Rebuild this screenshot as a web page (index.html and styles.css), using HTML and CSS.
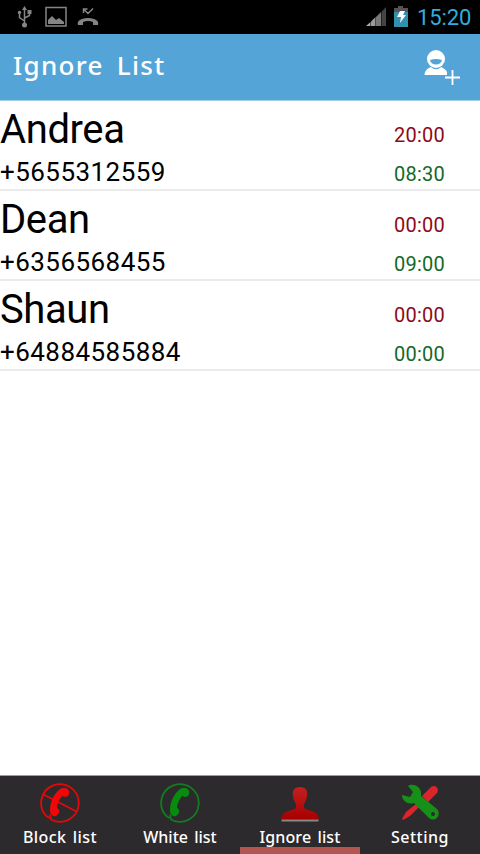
FILE: index.html
```
<!DOCTYPE html>
<html lang="en">
<head>
<meta charset="utf-8">
<title>Ignore List</title>
<link rel="stylesheet" href="styles.css">
</head>
<body>
<div class="status">
  <svg class="notices" width="110" height="34" viewBox="0 0 110 34" fill="none" stroke="#858585" stroke-width="1.5">
    <path d="M24.500 9v16M24.500 21l-5-3.500V13M24.500 18l5-2.500V12"/>
    <path d="M22 10l2.500-4 2.500 4z" fill="#858585" stroke="none"/>
    <circle cx="24.500" cy="25" r="2.500" fill="#858585" stroke="none"/>
    <circle cx="19.500" cy="12.500" r="1.700" fill="#858585" stroke="none"/>
    <path d="M27.500 10h4v4h-4z" fill="#858585" stroke="none"/>
    <path d="M46 7.500h20v18.500H46z"/>
    <path d="M48 24v-4l4-4 4 4 3-2 5 4v2z" fill="#858585" stroke="none"/>
    <path d="M78 25c-1-3 1-5 4-6 4-1.300 8-1.300 12 0 3 1 5 3 4 6h-5V22c-3-1.200-7-1.200-10 0v3z" fill="#858585" stroke="none"/>
    <path d="M83.500 13V9H87.500M84 9.500l4 4 5-5"/>
  </svg>
  <svg class="signals" width="50" height="34" viewBox="0 0 50 34">
    <path d="M1 26L5.500 22v4z" fill="#aaa"/><path d="M6 26v-4.500L10.500 17v9z" fill="#999"/><path d="M11 26v-9l5-5v14z" fill="#777"/><path d="M16.500 26V12L21 7v19z" fill="#444"/>
    <path d="M33 6h5v2h5v5H29V8h4z" fill="#5a5353"/>
    <path d="M29 12h14v15H29z" fill="#328fae"/>
    <path d="M35 11h5l-2 4h3l-6 8 1-6h-4z" fill="#fff"/>
  </svg>
  <span class="clock">15:20</span>
</div>
<header class="bar">
  <h1 class="title">Ignore List</h1>
  <svg class="add" width="38" height="38" viewBox="0 0 38 38">
    <circle cx="14" cy="11" r="9" fill="#fff"/>
    <path d="M8 12c4-1.500 8-1.500 12 0-1 6-11 6-12 0z" fill="#55a4d7"/>
    <path d="M2.500 27c.5-5 3-6.500 6.500-8 3 3 7 3 10 0 3 1.300 5 3 6 5v3z" fill="#fff"/>
    <path d="M30.500 22v15M23 29.500h15" stroke="#55a4d7" stroke-width="4"/>
    <path d="M30.500 22v15M23 29.500h15" stroke="#fff" stroke-width="1.800"/>
  </svg>
</header>
<main class="list">
  <section class="row"><div class="person"><div class="name">Andrea</div><div class="phone">+5655312559</div></div><div class="times"><div class="from">20:00</div><div class="to">08:30</div></div></section>
  <section class="row"><div class="person"><div class="name">Dean</div><div class="phone">+6356568455</div></div><div class="times"><div class="from">00:00</div><div class="to">09:00</div></div></section>
  <section class="row"><div class="person"><div class="name">Shaun</div><div class="phone">+64884585884</div></div><div class="times"><div class="from">00:00</div><div class="to">00:00</div></div></section>
</main>
<nav class="tabs">
  <div class="tab">
    <svg class="icon" viewBox="0 0 40 40" fill="none" stroke="#e60808" stroke-width="1.800">
      <path d="M9.500 35L6.700 33.300A18.800 18.800 0 1 1 11 36.500L10 31.500M3.500 11.500l33 17"/>
      <path d="M19 7c3-3 8-3 10 1 1 3-1 6-4 6l-3-1c-3 4-5 8-5 12 3 1 3 6-1 8-3 1-6-1-6-6 0-7 3-15 9-20z" fill="#f00808" stroke="none"/>
    </svg>
    <span class="label block">Block list</span>
  </div>
  <div class="tab">
    <svg class="icon" viewBox="0 0 40 40" fill="none" stroke="#137c20" stroke-width="1.800">
      <path d="M9.500 35L6.700 33.300A18.800 18.800 0 1 1 11 36.500L10 31.500"/>
      <path d="M19 7c3-3 8-3 10 1 1 3-1 6-4 6l-3-1c-3 4-5 8-5 12 3 1 3 6-1 8-3 1-6-1-6-6 0-7 3-15 9-20z" fill="#088c0d" stroke="none"/>
    </svg>
    <span class="label white">White list</span>
  </div>
  <div class="tab active">
    <svg class="icon" viewBox="0 0 40 40">
      <defs><linearGradient id="person" x2="0" y2="1"><stop stop-color="#c42020"/><stop offset="1" stop-color="#a80000"/></linearGradient></defs>
      <path d="M1.500 37.500h37" stroke="#888" stroke-width="2"/>
      <path d="M20 4c6 0 8 4 7 9-.4 4-2 6-3 8v4c3 3 14 2 15 11H1c1-9 12-8 15-11v-4c-1-2-2.600-4-3-8-1-5 1-9 7-9z" fill="url(#person)"/>
    </svg>
    <span class="label ignore">Ignore list</span>
  </div>
  <div class="tab">
    <svg class="icon" viewBox="0 0 40 40">
      <path d="M22 13l9-9c4-3 9 1 6 6l-9 9zM16 21l3 3-9 9-7 4-1-1 4-7z" fill="#d9252b"/>
      <path d="M10 2l-2 1 5 6-3 5-8-2C2 18 8 22 14 20l15 15c6 5 13-3 8-9L21 13C22 6 17 1 10 2z" fill="#169018"/>
      <circle cx="33" cy="31" r="2" fill="#2d2a2d"/>
    </svg>
    <span class="label setting">Setting</span>
  </div>
</nav>
</body>
</html>
```
FILE: styles.css
```
* { box-sizing: border-box; }
body { margin: 0; width: 480px; height: 854px; display: flex; flex-direction: column; background: #fff; font-family: Roboto, sans-serif; overflow: hidden; }
.status { height: 34px; flex: none; background: #000; display: flex; }
.signals { margin-left: 255px; }
.clock { margin-left: 2px; color: #32addb; font-size: 22px; line-height: 35px; letter-spacing: -0.1px; }
.bar { height: 67px; flex: none; display: flex; justify-content: space-between; background: #55a4d7; border-bottom: 1px solid #a5cde6; padding: 0 20px 0 13px; }
.title { margin: 0; color: #fff; font: 500 26px/62px "Noto Sans", sans-serif; letter-spacing: 1.3px; word-spacing: 5px; }
.add { margin-top: 14px; }
.list { flex: 1; }
.row { height: 90px; display: flex; justify-content: space-between; border-bottom: 2px solid #ebebeb; padding-right: 35px; }
.name { font-size: 40px; line-height: 47px; padding-top: 5px; letter-spacing: -0.4px; }
.phone { font-size: 26px; line-height: 30px; padding-top: 4px; letter-spacing: 0.45px; }
.times { font-size: 20px; line-height: 24px; padding-top: 22px; letter-spacing: 0.25px; }
.from { color: #8b0b16; }
.to { color: #11692a; margin-top: 15px; }
.tabs { height: 79px; flex: none; display: flex; background: #2d2a2d; border-top: 1px solid #9ba19d; }
.tab { width: 120px; padding-top: 7px; display: flex; flex-direction: column; align-items: center; border-bottom: 7px solid transparent; }
.active { border-color: #b35550; }
.icon { width: 40px; height: 40px; flex: none; }
.label { color: #fff; font: 500 16px/24px "Noto Sans", sans-serif; margin-top: 2px; white-space: nowrap; word-spacing: 2px; }
.block { letter-spacing: 0.4px; }
.white { letter-spacing: 0; }
.ignore { letter-spacing: 0.1px; }
.setting { letter-spacing: 0.5px; }
```
